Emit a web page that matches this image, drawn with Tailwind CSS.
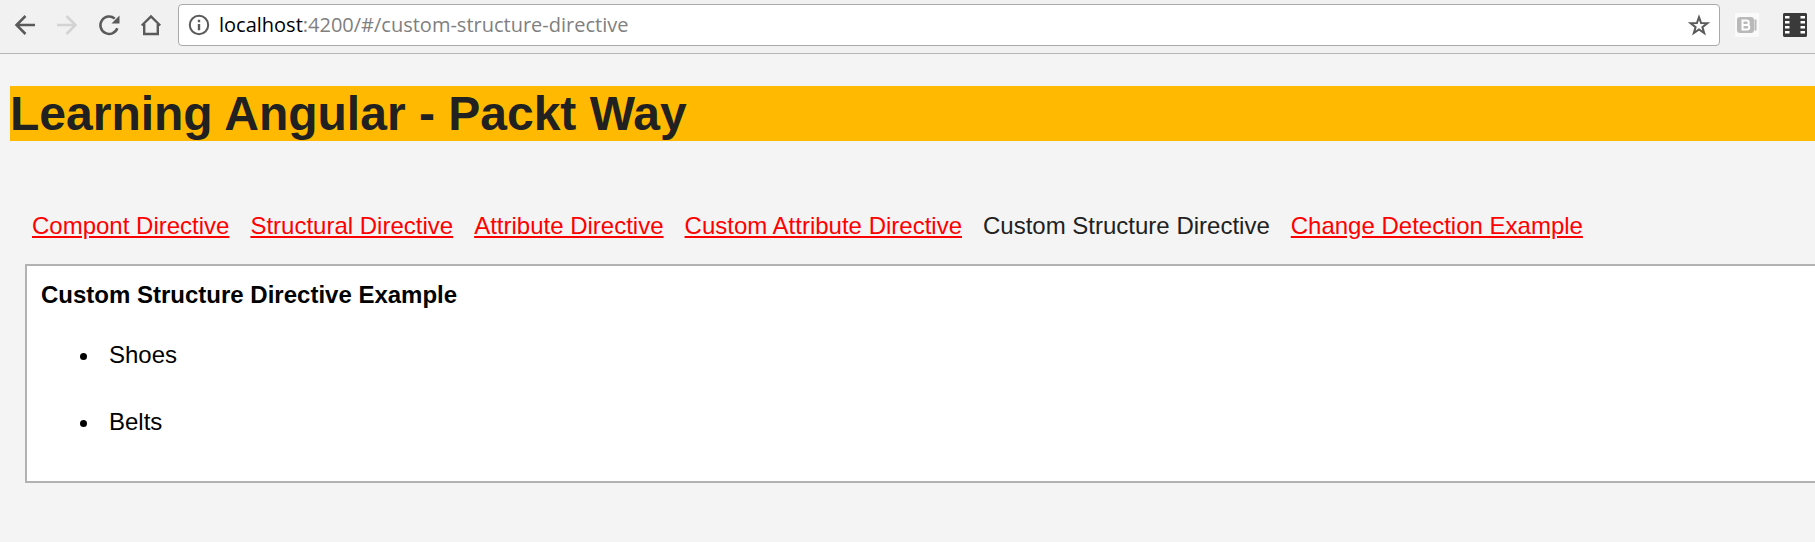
<!DOCTYPE html>
<html lang="en">
<head>
<meta charset="utf-8">
<meta name="viewport" content="width=device-width, initial-scale=1">
<title>Learning Angular - Packt Way</title>
<script src="https://cdn.jsdelivr.net/npm/@tailwindcss/browser@4"></script>
</head>
<body class="min-h-screen overflow-x-hidden bg-[#f4f4f4] font-['Liberation_Sans',Arial,sans-serif] text-[24px] leading-7 text-[#212121]">
<header class="flex items-center border-b border-[#b5b5b5] bg-[#f1f1f1] pt-1 pr-2 pb-[7px] pl-[13px] text-[#5a5a5a]">
  <div class="flex shrink-0 gap-[18px]">
    <button type="button" aria-label="Back" class="size-6"><svg viewBox="0 0 24 24" class="size-6" fill="none" stroke="currentColor" stroke-width="2.500"><path d="M22 12H4M12.500 3L3.500 12l9 9"/></svg></button>
    <button type="button" aria-label="Forward" disabled class="size-6 text-[#d3d3d3]"><svg viewBox="0 0 24 24" class="size-6" fill="none" stroke="currentColor" stroke-width="2.500"><path d="M2 12h18M11.500 3l9 9-9 9"/></svg></button>
    <button type="button" aria-label="Reload" class="size-6"><svg viewBox="0 0 24 24" class="size-6" fill="none" stroke="currentColor" stroke-width="2.500"><path d="M20.300 15.200A8.700 8.700 0 1 1 17.800 5.600"/><path d="M22.500 2.500v8h-8z" fill="currentColor" stroke="none"/></svg></button>
    <button type="button" aria-label="Home" class="size-6"><svg viewBox="0 0 24 24" class="size-6" fill="none" stroke="currentColor" stroke-width="2.400"><path d="M2.800 12.500L12 3.500l9.200 9M5.200 11v10h13.600V11"/></svg></button>
  </div>
  <div class="ml-[15px] flex h-[42px] min-w-0 flex-1 items-center rounded-[4px] border border-[#a9a9a9] bg-white px-2">
    <button type="button" aria-label="Site information" class="size-6 shrink-0"><svg viewBox="0 0 24 24" class="size-6"><circle cx="12" cy="12" r="9.200" fill="none" stroke="currentColor" stroke-width="2"/><path d="M10.800 6.800h2.400v2.400h-2.400zM10.800 11h2.400v6.200h-2.400z" fill="currentColor"/></svg></button>
    <label for="url" class="ml-2 font-['Open_Sans','Noto_Sans',sans-serif] text-[20px] leading-7 text-black">localhost</label>
    <input id="url" type="text" value=":4200/#/custom-structure-directive" class="h-7 min-w-0 flex-1 bg-transparent font-['Open_Sans','Noto_Sans',sans-serif] text-[20px] leading-7 text-[#808080] outline-none">
    <button type="button" aria-label="Bookmark this page" class="size-6 shrink-0"><svg viewBox="0 0 24 24" class="size-6" fill="none" stroke="currentColor" stroke-width="2"><path d="M12 4.200l2.100 5.900 6.300.1-5 3.900 1.800 6-5.200-3.600-5.200 3.600 1.800-6-5-3.900 6.300-.1z"/></svg></button>
  </div>
  <div class="ml-[15px] flex shrink-0 gap-6">
    <button type="button" aria-label="Batarang extension" class="size-6"><svg viewBox="0 0 24 24" class="size-6"><path fill="#fafafa" d="M0 0h24v24H0z"/><rect x="2" y="4" width="17" height="16" rx="3" fill="#b9b9b9"/><path d="M20.500 6.500v11" stroke="#b9b9b9" stroke-width="2"/><path d="M7.500 7.500v9H12a2.200 2.200 0 0 0 0-4.500H8h3.500a2.200 2.200 0 0 0 0-4.500z" fill="none" stroke="#fff" stroke-width="2"/></svg></button>
    <button type="button" aria-label="Film extension" class="size-6"><svg viewBox="0 0 24 24" class="size-6"><path d="M1 0h22l1 1v22l-1 1H1l-1-1V1z" fill="#3a3a3a"/><path fill="#fff" d="M2 3h4.500v2.500H2zM2 8h4.500v2.500H2zM2 13h4.500v2.500H2zM2 18h4.500v2.500H2zM17.500 3H22v2.500h-4.500zM17.500 8H22v2.500h-4.500zM17.500 13H22v2.500h-4.500zM17.500 18H22v2.500h-4.500z"/></svg></button>
  </div>
</header>
<main class="pt-8 pl-[10px]">
  <h1 class="bg-[#ffba00] text-[48px] leading-[55px] font-bold">Learning Angular - Packt Way</h1>
  <nav aria-label="Examples" class="mt-[71px] ml-[22px] flex flex-wrap gap-x-[21px]">
    <a href="#/component-directive" class="text-[#ff0000] underline">Compont Directive</a>
    <a href="#/structural-directive" class="text-[#ff0000] underline">Structural Directive</a>
    <a href="#/attribute-directive" class="text-[#ff0000] underline">Attribute Directive</a>
    <a href="#/custom-attribute-directive" class="text-[#ff0000] underline">Custom Attribute Directive</a>
    <a href="#/custom-structure-directive" aria-current="page">Custom Structure Directive</a>
    <a href="#/change-detection" class="text-[#ff0000] underline">Change Detection Example</a>
  </nav>
  <section class="mt-6 ml-[15px] border-2 border-r-0 border-[#b2b2b2] bg-white px-[14px] pt-[15px] pb-[45px] text-black">
    <h2 class="font-bold">Custom Structure Directive Example</h2>
    <ul class="mt-8 flex list-disc flex-col gap-[39px] pl-[60px]">
      <li class="pl-2">Shoes</li>
      <li class="pl-2">Belts</li>
    </ul>
  </section>
</main>
</body>
</html>
